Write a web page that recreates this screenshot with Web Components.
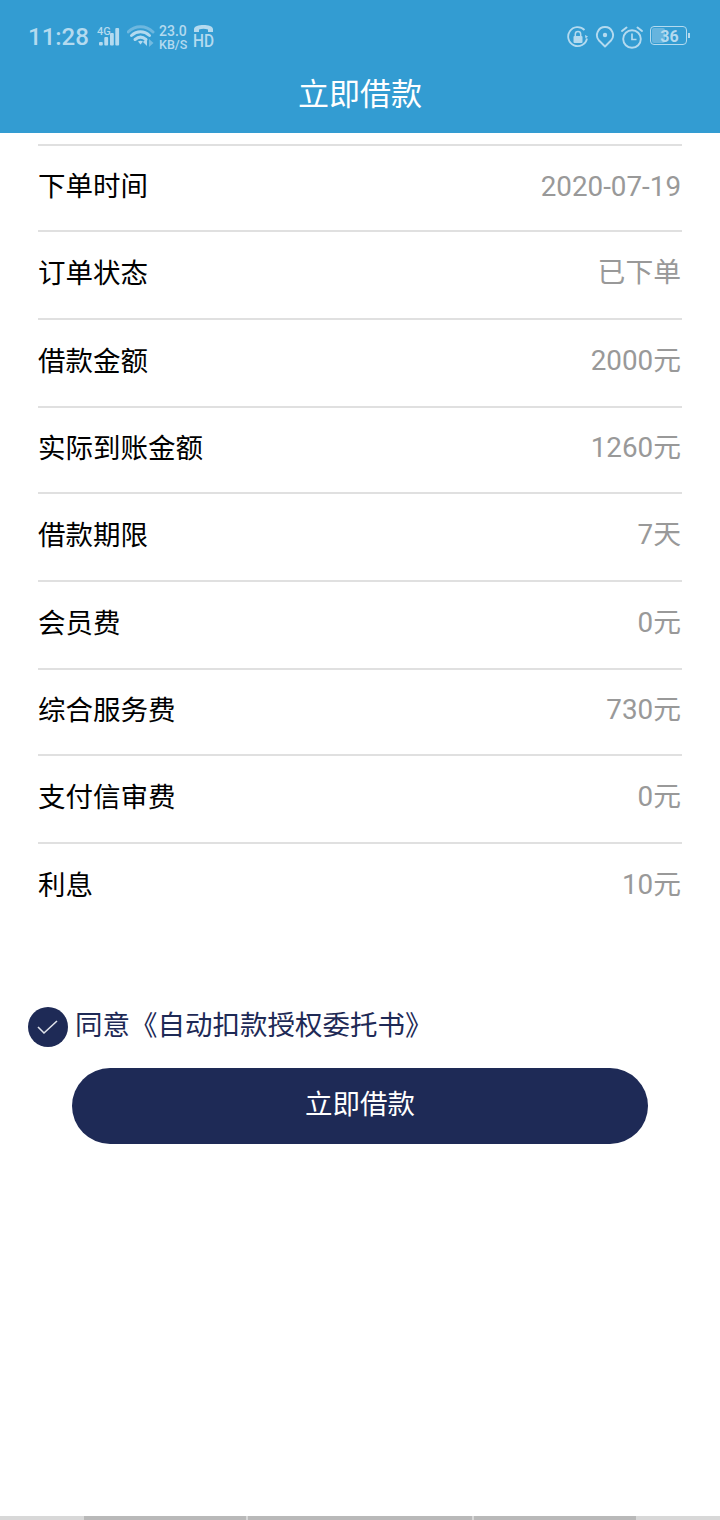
<!DOCTYPE html>
<html lang="zh">
<head>
<meta charset="utf-8">
<title>立即借款</title>
<style>
  html, body { margin: 0; padding: 0; background: #fff; }
  body { font-family: Roboto, "Noto Sans CJK SC", sans-serif; }
</style>
</head>
<body>
<loan-page>
  <app-header slot="header" title="立即借款"></app-header>
  <order-list>
    <order-row label="下单时间" value="2020-07-19"></order-row>
    <order-row label="订单状态" value="已下单"></order-row>
    <order-row label="借款金额" value="2000元"></order-row>
    <order-row label="实际到账金额" value="1260元"></order-row>
    <order-row label="借款期限" value="7天"></order-row>
    <order-row label="会员费" value="0元"></order-row>
    <order-row label="综合服务费" value="730元"></order-row>
    <order-row label="支付信审费" value="0元"></order-row>
    <order-row label="利息" value="10元"></order-row>
  </order-list>
  <agree-check>同意《自动扣款授权委托书》</agree-check>
  <submit-button>立即借款</submit-button>
  <nav-strip slot="footer"></nav-strip>
</loan-page>

<template id="tmpl-page">
  <style>
    :host { display: flex; flex-direction: column; height: 1520px; overflow: hidden; }
    main { flex: 1; }
  </style>
  <slot name="header"></slot>
  <main><slot></slot></main>
  <slot name="footer"></slot>
</template>

<template id="tmpl-header">
  <style>
    :host { display: block; height: 133px; background: #339cd2; color: #fff; }
    status-bar { height: 75px; }
    h1 { margin: 0; font: 400 31px/40px Roboto, "Noto Sans CJK SC", sans-serif; text-align: center; }
  </style>
  <status-bar></status-bar>
  <h1></h1>
</template>

<template id="tmpl-status">
  <style>
    :host { display: flex; justify-content: space-between; align-items: flex-start; padding: 0 30px 0 28px; color: #b4daef; font-family: Roboto, sans-serif; }
    .side { display: flex; align-items: flex-start; padding-top: 24px; }
    .time { font-size: 24px; font-weight: 500; line-height: 27px; width: 69px; }
    svg { display: block; flex: none; }
    .speed { width: 34px; margin-left: 2px; font-weight: 500; padding-top: 1px; }
    .speed div { font-size: 14px; line-height: 13px; white-space: nowrap; }
    .speed div + div { font-size: 12.5px; }
    .batt { position: relative; width: 37px; height: 19px; margin: 2px 0 0 6px; box-sizing: border-box; border: 1px solid #b4daef; border-radius: 4px; text-align: center; font-size: 16px; font-weight: 700; line-height: 19px; }
    .batt i { position: absolute; left: 1px; top: 1px; bottom: 1px; width: 13px; border-radius: 2px; background: rgba(180,218,239,.4); }
    .batt span { position: relative; left: 1px; }
    .nub { width: 2px; height: 5px; margin: 9px 0 0 1px; background: #b4daef; }
  </style>
  <div class="side">
    <span class="time">11:28</span>
    <svg width="24" height="24" viewBox="0 0 24 24">
      <text x="0" y="11" font-family="Roboto" font-size="11" font-weight="500" fill="#b4daef">4G</text>
      <g fill="#b4daef">
        <rect x="2" y="18" width="3.8" height="3.500" rx="1"/>
        <rect x="7.300" y="13" width="3.800" height="8.500" rx="1"/>
        <rect x="13" y="9" width="3.800" height="12.500" rx="1"/>
        <rect x="18.300" y="4" width="3.800" height="17.500" rx="1"/>
      </g>
    </svg>
    <svg width="30" height="24" viewBox="0 0 30 24" style="margin-left:6px">
      <g fill="none" stroke-linecap="round">
        <path d="M1 8 C8 1 19 1 26 8" stroke="#b4daef" stroke-opacity=".45" stroke-width="3"/>
        <path d="M4.500 11.500 C10 6.500 17 6.500 22.500 11.500" stroke="#b4daef" stroke-width="3"/>
        <path d="M8 15.500 C11.500 12.500 15.500 12.500 19 15.500" stroke="#b4daef" stroke-width="3"/>
      </g>
      <path d="M13.500 20.500 L11 17.500 C12.500 16.500 14.500 16.500 16 17.500 Z" fill="#b4daef"/>
      <path d="M20 14 V22 L16 18 Z" fill="#b4daef"/>
      <path d="M22 15 L26.500 19 L22 23 Z" fill="#b4daef" fill-opacity=".5"/>
    </svg>
    <div class="speed"><div>23.0</div><div>KB/S</div></div>
    <svg width="28" height="26" viewBox="0 0 28 26">
      <path d="M1 8 L1 5 C1 -0.500 20 -0.500 20 5 L20 8 L15 8 L15 5.500 C12 4.500 9 4.500 6 5.500 L6 8 Z" fill="#b4daef"/>
      <text x="0" y="23" font-family="Roboto" font-size="18" font-weight="500" fill="#b4daef" textLength="21" lengthAdjust="spacingAndGlyphs">HD</text>
    </svg>
  </div>
  <div class="side">
    <svg width="22" height="22" viewBox="0 0 22 22" style="margin-top:2px">
      <path d="M17.500 4 A9.500 9.500 0 1 0 20 12.500" fill="none" stroke="#b4daef" stroke-width="1.800"/>
      <path d="M18 9 L21 10.500 L18.500 12.500 Z" fill="#b4daef"/>
      <rect x="6.500" y="10" width="9" height="7" rx="1" fill="#b4daef"/>
      <path d="M8.300 10 V8.300 a2.700 2.700 0 0 1 5.400 0 V10" fill="none" stroke="#b4daef" stroke-width="1.500"/>
    </svg>
    <svg width="20" height="22" viewBox="0 0 20 22" style="margin:2px 0 0 6px">
      <path d="M10 20.500 L4 14.500 C-0.500 9.500 3 1 10 1 C17 1 20.500 9.500 16 14.500 Z" fill="none" stroke="#b4daef" stroke-width="1.900" stroke-linejoin="round"/>
      <circle cx="10" cy="9" r="2.200" fill="#b4daef"/>
    </svg>
    <svg width="24" height="24" viewBox="0 0 24 24" style="margin:1px 0 0 5px">
      <circle cx="12" cy="14" r="8.800" fill="none" stroke="#b4daef" stroke-width="1.900"/>
      <path d="M12 8.500 V14.500 H16.500" fill="none" stroke="#b4daef" stroke-width="1.700"/>
      <path d="M2 6 L6.500 2.500 M22 6 L17.500 2.500" stroke="#b4daef" stroke-width="2" stroke-linecap="round"/>
    </svg>
    <div class="batt"><i></i><span>36</span></div>
    <div class="nub"></div>
  </div>
</template>

<template id="tmpl-list">
  <style>
    :host { display: block; margin: 11px 38px 0; }
    ::slotted(:nth-child(3n+1)) { height: 86px; }
  </style>
  <slot></slot>
</template>

<template id="tmpl-row">
  <style>
    :host { display: flex; justify-content: space-between; align-items: center; box-sizing: border-box; height: 88px; border-top: 2px solid #e0e0e0; padding: 0 1px 0 0; }
    .label { color: #000; font: 27.5px "Noto Sans CJK SC", sans-serif; padding-bottom: 9px; }
    .value { color: #999; font: 27.8px Roboto, "Noto Sans CJK SC", sans-serif; padding-bottom: 10px; }
    .value.digits { padding-bottom: 3px; }
  </style>
  <span class="label"></span>
  <span class="value"></span>
</template>

<template id="tmpl-agree">
  <style>
    :host { display: flex; align-items: center; gap: 7px; margin: 77px 0 0 28px; height: 40px; color: #1e2a56; font: 27.5px/40px "Noto Sans CJK SC", sans-serif; }
    .tick { width: 40px; height: 40px; flex: none; }
    span { padding-bottom: 8px; }
  </style>
  <svg class="tick" viewBox="0 0 40 40">
    <circle cx="20" cy="20" r="20" fill="#1e2a56"/>
    <path d="M10 20 L16 26 L29 14" fill="none" stroke="#dfe2ea" stroke-width="1.600"/>
  </svg>
  <span><slot></slot></span>
</template>

<template id="tmpl-button">
  <style>
    :host { display: block; margin: 21px 72px 0; }
    button { display: block; width: 100%; height: 76px; padding: 0 0 8px; border: 0; border-radius: 38px; background: #1e2a56; color: #fff; font: 27.5px "Noto Sans CJK SC", sans-serif; }
  </style>
  <button><slot></slot></button>
</template>

<template id="tmpl-nav">
  <style>
    :host { display: flex; gap: 2px; height: 4px; padding: 0 84px; background: #d8d8d8; }
    i { background: #b9b9b9; width: 162px; }
    i:nth-of-type(2) { width: 224px; }
  </style>
  <i></i><i></i><i></i>
</template>

<script>
  "use strict";

  function mount(host, id) {
    const root = host.attachShadow({mode: "open"});
    root.append(document.getElementById(id).content.cloneNode(true));
    return root;
  }

  customElements.define("loan-page", class extends HTMLElement {
    constructor() { super(); mount(this, "tmpl-page"); }
  });

  customElements.define("status-bar", class extends HTMLElement {
    constructor() { super(); mount(this, "tmpl-status"); }
  });

  customElements.define("app-header", class extends HTMLElement {
    connectedCallback() {
      if (this.shadowRoot) return;
      const root = mount(this, "tmpl-header");
      root.querySelector("h1").textContent = this.getAttribute("title");
    }
  });

  customElements.define("order-list", class extends HTMLElement {
    constructor() { super(); mount(this, "tmpl-list"); }
  });

  customElements.define("order-row", class extends HTMLElement {
    connectedCallback() {
      if (this.shadowRoot) return;
      const root = mount(this, "tmpl-row");
      const value = this.getAttribute("value");
      root.querySelector(".label").textContent = this.getAttribute("label");
      const el = root.querySelector(".value");
      el.textContent = value;
      // Roboto only line box sits higher than one with a CJK glyph
      if (/^[\d-]+$/.test(value)) el.classList.add("digits");
    }
  });

  customElements.define("agree-check", class extends HTMLElement {
    constructor() { super(); mount(this, "tmpl-agree"); }
  });

  customElements.define("submit-button", class extends HTMLElement {
    constructor() { super(); mount(this, "tmpl-button"); }
  });

  customElements.define("nav-strip", class extends HTMLElement {
    constructor() { super(); mount(this, "tmpl-nav"); }
  });
</script>
</body>
</html>
